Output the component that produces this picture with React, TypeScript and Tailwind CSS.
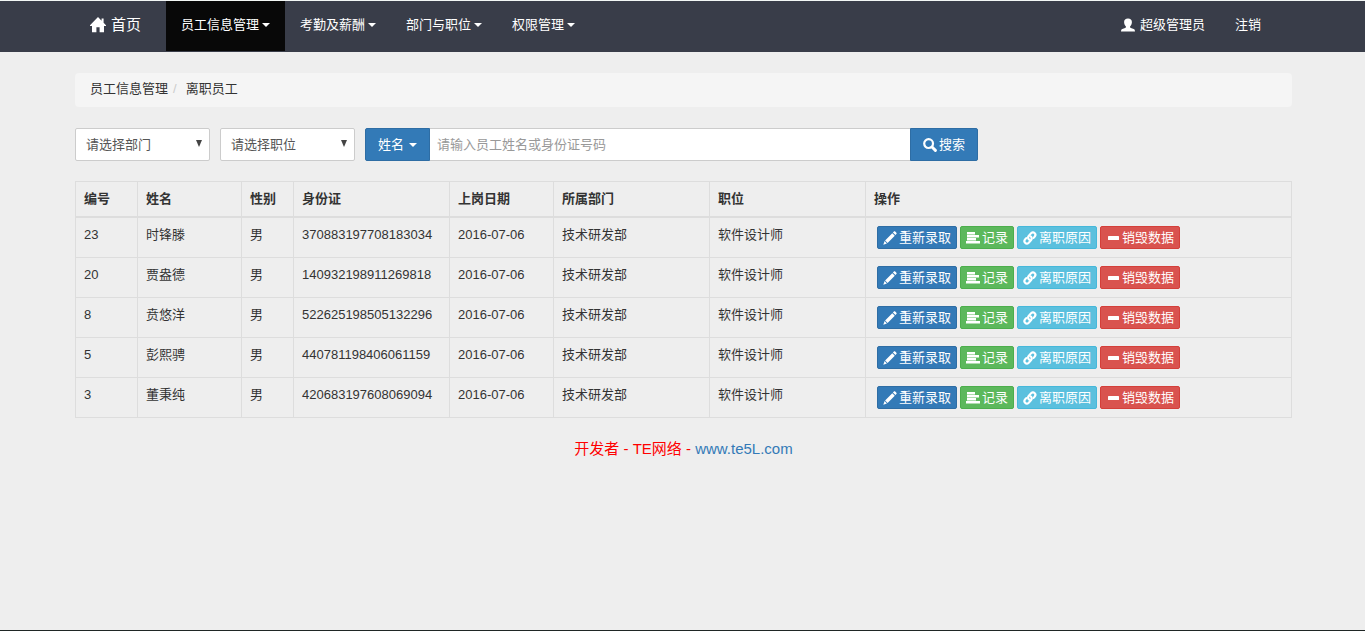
import React from 'react';

interface Employee {
  id: number;
  name: string;
  gender: string;
  idCard: string;
  date: string;
  department: string;
  position: string;
}

const employees: Employee[] = [
  { id: 23, name: '时锋滕', gender: '男', idCard: '370883197708183034', date: '2016-07-06', department: '技术研发部', position: '软件设计师' },
  { id: 20, name: '贾盎德', gender: '男', idCard: '140932198911269818', date: '2016-07-06', department: '技术研发部', position: '软件设计师' },
  { id: 8, name: '贲悠洋', gender: '男', idCard: '522625198505132296', date: '2016-07-06', department: '技术研发部', position: '软件设计师' },
  { id: 5, name: '彭熙骋', gender: '男', idCard: '440781198406061159', date: '2016-07-06', department: '技术研发部', position: '软件设计师' },
  { id: 3, name: '董秉纯', gender: '男', idCard: '420683197608069094', date: '2016-07-06', department: '技术研发部', position: '软件设计师' },
];

const columns = ['编号', '姓名', '性别', '身份证', '上岗日期', '所属部门', '职位', '操作'];

const HomeIcon = () => (
  <svg className="w-4 h-4 shrink-0" viewBox="0 0 16 16" fill="currentColor" aria-hidden="true">
    <path d="M8 0 L11.6 3.7 V1.6 H13.6 V5.7 L16 8.3 V9 H14 V15.2 H9.6 V10.2 H6.4 V15.2 H2 V9 H0 V8.3 Z" />
  </svg>
);

const UserIcon = () => (
  <svg className="w-3.5 h-3.5 shrink-0" viewBox="0 0 14 14" fill="currentColor" aria-hidden="true">
    <path d="M7 0.4 C9.5 0.4 10.9 1.8 10.9 4 C10.9 5.9 10.2 7.2 9.2 8.2 C8.9 9 9.1 9.5 9.9 9.9 L12.7 11.1 C13.5 11.5 13.9 12 14 13.4 H0 C0.1 12 0.5 11.5 1.3 11.1 L4.1 9.9 C4.9 9.5 5.1 9 4.8 8.2 C3.8 7.2 3.1 5.9 3.1 4 C3.1 1.8 4.5 0.4 7 0.4 Z" />
  </svg>
);

const SearchIcon = () => (
  <svg className="w-3.5 h-3.5 shrink-0" viewBox="0 0 14 14" fill="none" stroke="currentColor" aria-hidden="true">
    <circle cx="5.6" cy="5.6" r="4.4" strokeWidth="2.2" />
    <path d="M9 9 L12.4 12.4" strokeWidth="2.9" strokeLinecap="round" />
  </svg>
);

const PencilIcon = () => (
  <svg className="w-3.5 h-3.5 shrink-0" viewBox="0 0 14 14" fill="currentColor" aria-hidden="true">
    <path d="M10.9 0.6 C11.3 0.2 11.8 0.2 12.2 0.6 L13.4 1.8 C13.8 2.2 13.8 2.7 13.4 3.1 L12.4 4.1 L9.9 1.6 Z M9.3 2.2 L11.8 4.7 L4.6 11.9 L2.1 9.4 Z M1.6 10.1 L3.9 12.4 L0.3 13.7 Z" />
  </svg>
);

const AlignLeftIcon = () => (
  <svg className="w-3.5 h-3.5 shrink-0" viewBox="0 0 14 14" fill="currentColor" aria-hidden="true">
    <path d="M1 1 H9 V3.4 H1 Z M1 4 H13 V6.4 H1 Z M1 7 H10 V9.4 H1 Z M0 10 H14 V12.6 H0 Z" />
  </svg>
);

const LinkIcon = () => (
  <svg className="w-3.5 h-3.5 shrink-0" viewBox="0 0 14 14" fill="none" stroke="currentColor" strokeWidth="2.2" strokeLinecap="round" aria-hidden="true">
    <path d="M6.2 8.6 C4.9 7.8 4.8 6.1 5.7 5 L7.9 2.4 C8.9 1.2 10.5 1.1 11.5 2 C12.6 3 12.6 4.5 11.7 5.6 L10.6 6.9" />
    <path d="M7.6 5.4 C8.9 6.2 9 7.9 8.1 9 L5.9 11.6 C4.9 12.8 3.3 12.9 2.3 12 C1.2 11 1.2 9.5 2.1 8.4 L3.2 7.1" />
  </svg>
);

const MinusIcon = () => (
  <svg className="w-3.5 h-3.5 shrink-0" viewBox="0 0 14 14" fill="currentColor" aria-hidden="true">
    <rect x="2" y="5" width="11" height="4" rx="0.6" />
  </svg>
);

const Caret = () => (
  <svg className="w-2 h-1 shrink-0" viewBox="0 0 8 4" fill="currentColor" aria-hidden="true">
    <path d="M0 0 H8 L4 4 Z" />
  </svg>
);

const NavItem: React.FC<{ label: string; active?: boolean }> = ({ label, active }) => (
  <li>
    <button className={`flex items-center gap-[3px] h-[50px] px-[15px] pb-0.5 text-white ${active ? 'bg-[#080808]' : 'hover:bg-[#2c303a]'}`}>
      {label}
      <Caret />
    </button>
  </li>
);

const ActionButton: React.FC<{ icon: React.ReactNode; label: string; color: string }> = ({ icon, label, color }) => (
  <button className={`flex items-center gap-0.5 h-[23px] px-[5px] border rounded-xs text-white whitespace-nowrap ${color}`}>
    {icon}
    {label}
  </button>
);

const FilterSelect: React.FC<{ label: string; placeholder: string }> = ({ label, placeholder }) => (
  <div className="relative w-[135px]">
    <select aria-label={label} className="appearance-none w-full h-[33px] pl-[10px] pr-5 bg-white border border-[#ccc] rounded-xs text-[#555]">
      <option>{placeholder}</option>
    </select>
    <svg className="absolute right-2 top-3 w-1.5 h-[7px] pointer-events-none text-[#444]" viewBox="0 0 6 7" fill="currentColor" aria-hidden="true">
      <path d="M0 0 H6 L3 7 Z" />
    </svg>
  </div>
);

export default function App() {
  return (
    <div className="min-h-screen flex flex-col bg-[#eee] text-[#333] text-[13px] leading-[18px] font-['Liberation_Sans','Noto_Sans_CJK_SC',sans-serif]">
      {/* 导航栏 */}
      <header className="bg-[#393d49] border-t border-[#f3f7f5]">
        <nav className="flex items-start justify-between h-[51px] pl-[75px] pr-[73px] text-white">
          <div className="flex">
            <a href="#" className="flex items-center gap-[5px] h-[50px] px-[15px] pb-0.5 mr-[10px] text-[15px]">
              <HomeIcon />
              首页
            </a>
            <ul className="flex">
              <NavItem label="员工信息管理" active />
              <NavItem label="考勤及薪酬" />
              <NavItem label="部门与职位" />
              <NavItem label="权限管理" />
            </ul>
          </div>
          <div className="flex pr-4">
            <a href="#" className="flex items-center gap-[5px] h-[50px] px-[15px] pb-0.5">
              <UserIcon />
              超级管理员
            </a>
            <a href="#" className="flex items-center h-[50px] px-[15px] pb-0.5">注销</a>
          </div>
        </nav>
      </header>

      <main className="flex-1 pl-[75px] pr-[73px] pt-[21px]">
        {/* 面包屑 */}
        <ol className="flex px-[15px] pt-[7px] pb-[9px] mb-[21px] bg-[#f5f5f5] rounded">
          <li><a href="#">员工信息管理</a></li>
          <li className="px-[5px] text-[#ccc]">/</li>
          <li className="pl-1">离职员工</li>
        </ol>

        {/* 搜索 */}
        <form className="flex gap-[10px] mb-5" onSubmit={(e) => e.preventDefault()}>
          <FilterSelect label="部门" placeholder="请选择部门" />
          <FilterSelect label="职位" placeholder="请选择职位" />
          <div className="flex flex-1 max-w-[613px]">
            <button type="button" className="flex items-center gap-[5px] h-[33px] px-3 bg-[#337ab7] border border-[#2e6da4] rounded-l-xs text-white whitespace-nowrap">
              姓名
              <Caret />
            </button>
            <input
              type="text"
              aria-label="关键字"
              placeholder="请输入员工姓名或身份证号码"
              className="flex-1 min-w-0 h-[33px] px-[7px] bg-white border-y border-[#ccc] text-[#555] placeholder:text-[#999] outline-none"
            />
            <button type="submit" className="flex items-center gap-0.5 h-[33px] px-3 bg-[#337ab7] border border-[#2e6da4] rounded-r-xs text-white whitespace-nowrap">
              <SearchIcon />
              搜索
            </button>
          </div>
        </form>

        {/* 离职员工列表 */}
        <table className="w-full table-fixed border-collapse border border-[#ddd]">
          <colgroup>
            <col className="w-[62px]" />
            <col className="w-[104px]" />
            <col className="w-[52px]" />
            <col className="w-[156px]" />
            <col className="w-[104px]" />
            <col className="w-[156px]" />
            <col className="w-[156px]" />
            <col />
          </colgroup>
          <thead>
            <tr>
              {columns.map((title) => (
                <th key={title} className="p-2 text-left font-bold border border-b-2 border-[#ddd]">{title}</th>
              ))}
            </tr>
          </thead>
          <tbody>
            {employees.map((emp) => (
              <tr key={emp.id}>
                <td className="p-2 align-top border border-[#ddd]">{emp.id}</td>
                <td className="p-2 align-top border border-[#ddd]">{emp.name}</td>
                <td className="p-2 align-top border border-[#ddd]">{emp.gender}</td>
                <td className="p-2 align-top border border-[#ddd]">{emp.idCard}</td>
                <td className="p-2 align-top border border-[#ddd]">{emp.date}</td>
                <td className="p-2 align-top border border-[#ddd]">{emp.department}</td>
                <td className="p-2 align-top border border-[#ddd]">{emp.position}</td>
                <td className="py-2 px-[11px] align-top border border-[#ddd]">
                  <div className="flex gap-[3px]">
                    <ActionButton icon={<PencilIcon />} label="重新录取" color="bg-[#337ab7] border-[#2e6da4]" />
                    <ActionButton icon={<AlignLeftIcon />} label="记录" color="bg-[#5cb85c] border-[#4cae4c]" />
                    <ActionButton icon={<LinkIcon />} label="离职原因" color="bg-[#5bc0de] border-[#46b8da]" />
                    <ActionButton icon={<MinusIcon />} label="销毁数据" color="bg-[#d9534f] border-[#d43f3a]" />
                  </div>
                </td>
              </tr>
            ))}
          </tbody>
        </table>

        <p className="mt-5 text-center text-[15px] leading-[22px] text-[#f00]">
          开发者 - TE网络 - <a href="#" className="text-[#337ab7]">www.te5L.com</a>
        </p>
      </main>

      <div className="h-px bg-[#1f2625]" />
    </div>
  );
}
